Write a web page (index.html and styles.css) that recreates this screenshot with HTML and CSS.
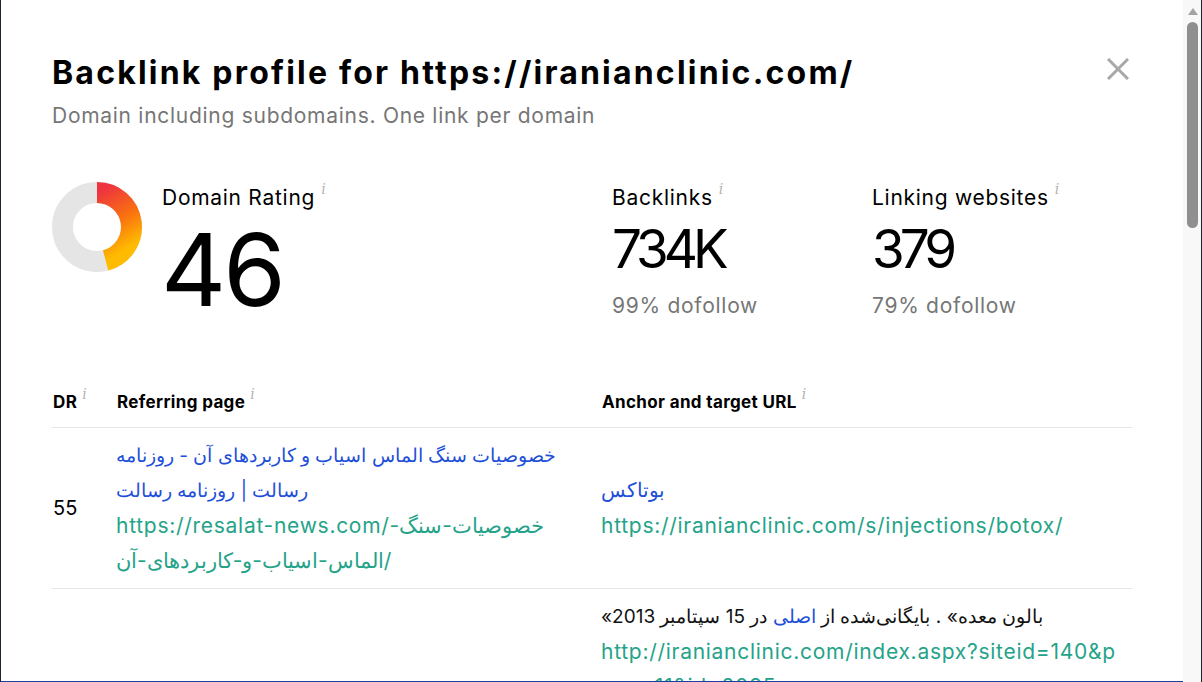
FILE: index.html
```html
<!DOCTYPE html>
<html lang="en">
<head>
<meta charset="utf-8">
<title>Backlink profile</title>
<link rel="stylesheet" href="styles.css">
</head>
<body>
<div class="frame">
  <div class="main">
    <div class="head">
      <h1 class="title">Backlink profile for https://iranianclinic.com/</h1>
      <button class="close" aria-label="Close">
        <svg width="22" height="22" viewBox="0 0 22 22"><path d="M1 1L21 21M21 1L1 21" stroke="#a8a8a8" stroke-width="3"/></svg>
      </button>
    </div>
    <p class="subtitle">Domain including subdomains. One link per domain</p>

    <div class="stats">
      <div class="stat dr">
        <svg class="donut" width="90" height="90" viewBox="0 0 90 90">
          <defs>
            <linearGradient id="g" x1="0" y1="0" x2="0.3" y2="1">
              <stop offset="0" stop-color="#ee3340"/>
              <stop offset="0.55" stop-color="#f9720f"/>
              <stop offset="1" stop-color="#ffbb00"/>
            </linearGradient>
          </defs>
          <circle cx="45" cy="45" r="34.5" fill="none" stroke="#e5e5e5" stroke-width="21"/>
          <path d="M45 10.5 A34.5 34.5 0 0 1 53.6 78.4" fill="none" stroke="url(#g)" stroke-width="21"/>
        </svg>
        <div class="stat-text">
          <div class="label">Domain Rating<span class="info">i</span></div>
          <div class="big">46</div>
        </div>
      </div>
      <div class="stat">
        <div class="label">Backlinks<span class="info">i</span></div>
        <div class="num">734K</div>
        <div class="sub">99% dofollow</div>
      </div>
      <div class="stat">
        <div class="label">Linking websites<span class="info">i</span></div>
        <div class="num">379</div>
        <div class="sub">79% dofollow</div>
      </div>
    </div>

    <div class="table">
      <div class="row header">
        <div class="hcell">DR<span class="info">i</span></div>
        <div class="hcell">Referring page<span class="info">i</span></div>
        <div class="hcell">Anchor and target URL<span class="info">i</span></div>
      </div>
      <div class="row">
        <div class="cell dr-val">55</div>
        <div class="cell ref">
          <a class="link-title" href="#">خصوصیات سنگ الماس اسیاب و کاربردهای آن - روزنامه رسالت | روزنامه رسالت</a>
          <a class="link-url" href="#"><span class="ls">https://resalat-news.com/</span>خصوصیات-سنگ-الماس-اسیاب-و-کاربردهای-آن/</a>
        </div>
        <div class="cell mid">
          <a class="link-title anchor" href="#">بوتاکس</a>
          <a class="link-url ls" href="#">https://iranianclinic.com/s/injections/botox/</a>
        </div>
      </div>
      <div class="row">
        <div class="cell dr-val"></div>
        <div class="cell ref"></div>
        <div class="cell anch">
          <div class="snippet"><span dir="rtl" class="iso">بالون معده» . بایگانی‌شده از <span class="blue">اصلی</span> در 15 سپتامبر 2013»</span></div>
          <a class="link-url ls brk" href="#">http://iranianclinic.com/index.aspx?siteid=140&amp;page=11&amp;id=2085</a>
        </div>
      </div>
    </div>
  </div>
  <div class="scrollbar">
    <div class="arrow"></div>
    <div class="thumb"></div>
  </div>
</div>
</body>
</html>
```
FILE: styles.css
```css
* { box-sizing: border-box; }
html, body { margin: 0; padding: 0; }
body {
  background: #1c2434;
  font-family: Inter, "Noto Sans", sans-serif;
  color: #000;
}
.frame {
  width: 1202px;
  height: 682px;
  display: flex;
  border-left: 1px solid #1c2434;
  border-right: 1px solid #1c2434;
  background: #fff;
}
.main {
  flex: 1;
  overflow: hidden;
  border-bottom: 1px solid #1d3f9c;
  padding: 53px 51px 0 51px;
  background: #fff;
}
.scrollbar {
  width: 18px;
  background: #f8f8f8;
  display: flex;
  flex-direction: column;
  align-items: center;
  padding-top: 8px;
}
.arrow {
  width: 0; height: 0;
  border-left: 5.5px solid transparent;
  border-right: 5.5px solid transparent;
  border-bottom: 7px solid #a3a3a3;
  margin-left: 1px;
}
.thumb {
  width: 11px;
  height: 206px;
  margin-top: 7px;
  margin-left: 1px;
  border-radius: 6px;
  background: #8f8f8f;
}
.head {
  display: flex;
  justify-content: space-between;
  align-items: flex-start;
}
.title {
  margin: 0;
  font-size: 32px;
  line-height: 40px;
  font-weight: 700;
  letter-spacing: 2.2px;
}
.close {
  border: 0;
  background: none;
  padding: 0;
  margin: 5px 3px 0 0;
  width: 22px;
  height: 22px;
}
.close svg { display: block; }
.subtitle {
  margin: 9px 0 0;
  font-size: 21px;
  line-height: 28px;
  letter-spacing: 0.72px;
  color: #767676;
}
.stats {
  display: grid;
  grid-template-columns: 560px 260px 1fr;
  margin-top: 52px;
  height: 196px;
}
.stat.dr {
  display: flex;
  gap: 20px;
}
.donut { flex: none; }
.label {
  font-size: 21px;
  line-height: 28px;
  letter-spacing: 0.72px;
  margin-top: 2px;
}
.info {
  font-family: "DejaVu Serif", serif;
  font-style: italic;
  font-size: 14px;
  line-height: 14px;
  letter-spacing: 0;
  font-weight: 400;
  color: #b3b3b3;
  vertical-align: top;
  position: relative;
  top: -2px;
  margin-left: 6px;
}
.big {
  font-size: 101px;
  line-height: 101px;
  letter-spacing: -3px;
  margin-top: 7px;
  margin-left: -1px;
}
.num {
  font-size: 53px;
  line-height: 55px;
  letter-spacing: -5px;
  margin-top: 10px;
}
.sub {
  font-size: 21px;
  line-height: 28px;
  letter-spacing: 0.72px;
  margin-top: 15px;
  color: #767676;
}
.table {
  display: flex;
  flex-direction: column;
}
.row {
  display: grid;
  grid-template-columns: 64px 485px 1fr;
  border-bottom: 1px solid #e6e6e6;
  padding: 10px 0;
}
.row.header {
  padding: 14px 0 15px;
}
.hcell {
  font-size: 17px;
  line-height: 20px;
  font-weight: 700;
  letter-spacing: 0.35px;
  padding-left: 1px;
}
.hcell .info { top: -5px; margin-left: 5px; }
.cell {
  display: flex;
  flex-direction: column;
  justify-content: flex-start;
  align-items: flex-start;
}
.cell.ref { padding-right: 25px; }
.cell.anch { padding-right: 10px; }
.cell.mid, .cell.dr-val { justify-content: center; }
.dr-val { font-size: 20px; line-height: 35px; padding-left: 1px; }
.link-title, .link-url, .snippet {
  font-size: 20px;
  line-height: 35px;
  text-decoration: none;
}
.link-title {
  color: #1d4fd8;
  font-size: 19px;
}
.link-title.anchor { font-size: 20px; }
.link-url {
  color: #25a389;
  font-size: 21px;
  overflow-wrap: anywhere;
}
.ls { letter-spacing: 0.72px; }
.brk { word-break: break-all; }
.snippet {
  color: #111;
  font-size: 19px;
}
.iso { unicode-bidi: isolate; }
.blue { color: #1d4fd8; }
```
